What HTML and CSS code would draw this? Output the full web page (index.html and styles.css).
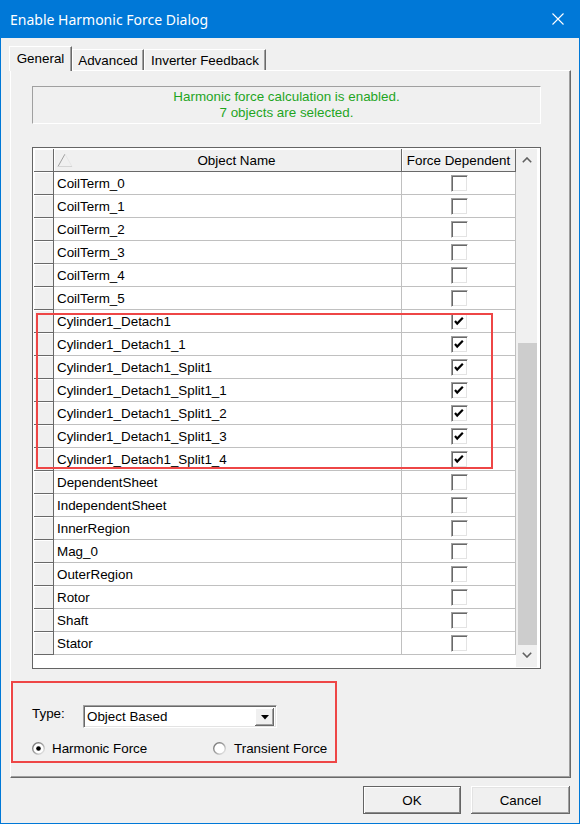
FILE: index.html
```html
<!DOCTYPE html>
<html>
<head>
<meta charset="utf-8">
<link rel="stylesheet" href="styles.css">
</head>
<body>
<div class="window">
  <div class="titlebar">
    <span class="title">Enable Harmonic Force Dialog</span>
    <svg class="close" width="12" height="12" viewBox="0 0 12 12"><path d="M0.5 0.5 L11.5 11.5 M11.5 0.5 L0.5 11.5" stroke="#fff" stroke-width="1.1" fill="none"/></svg>
  </div>
  <div class="client">
    <div class="tabs">
      <div class="tab active t1">General</div>
      <div class="tab t2">Advanced</div>
      <div class="tab t3">Inverter Feedback</div>
    </div>
    <div class="panel">
      <div class="message">
        <div>Harmonic force calculation is enabled.</div>
        <div>7 objects are selected.</div>
      </div>
      <div class="grid">
        <div class="main">
          <div class="row">
            <div class="rh hdr"></div>
            <div class="name hc">
              <svg class="tri" width="16" height="14" viewBox="0 0 16 14"><path d="M1 13.5 L8 1" stroke="#a0a0a0" stroke-width="1" fill="none"/><path d="M8 1 L15 13.5" stroke="#e6e6e6" stroke-width="1" fill="none"/><path d="M1 13.5 L15 13.5" stroke="#d4d4d4" stroke-width="1" fill="none"/></svg>
              <span class="hname">Object Name</span>
            </div>
            <div class="force hc">Force Dependent</div>
          </div>
          <div class="row"><div class="rh"></div><div class="name">CoilTerm_0</div><div class="force"><span class="cb"></span></div></div>
          <div class="row"><div class="rh"></div><div class="name">CoilTerm_1</div><div class="force"><span class="cb"></span></div></div>
          <div class="row"><div class="rh"></div><div class="name">CoilTerm_2</div><div class="force"><span class="cb"></span></div></div>
          <div class="row"><div class="rh"></div><div class="name">CoilTerm_3</div><div class="force"><span class="cb"></span></div></div>
          <div class="row"><div class="rh"></div><div class="name">CoilTerm_4</div><div class="force"><span class="cb"></span></div></div>
          <div class="row"><div class="rh"></div><div class="name">CoilTerm_5</div><div class="force"><span class="cb"></span></div></div>
          <div class="row"><div class="rh"></div><div class="name">Cylinder1_Detach1</div><div class="force"><span class="cb"><svg width="15" height="15" viewBox="0 0 15 15"><path d="M3 7 L5.2 9.6 L10.8 3.8" stroke="#000" stroke-width="2.2" fill="none"/></svg></span></div></div>
          <div class="row"><div class="rh"></div><div class="name">Cylinder1_Detach1_1</div><div class="force"><span class="cb"><svg width="15" height="15" viewBox="0 0 15 15"><path d="M3 7 L5.2 9.6 L10.8 3.8" stroke="#000" stroke-width="2.2" fill="none"/></svg></span></div></div>
          <div class="row"><div class="rh"></div><div class="name">Cylinder1_Detach1_Split1</div><div class="force"><span class="cb"><svg width="15" height="15" viewBox="0 0 15 15"><path d="M3 7 L5.2 9.6 L10.8 3.8" stroke="#000" stroke-width="2.2" fill="none"/></svg></span></div></div>
          <div class="row"><div class="rh"></div><div class="name">Cylinder1_Detach1_Split1_1</div><div class="force"><span class="cb"><svg width="15" height="15" viewBox="0 0 15 15"><path d="M3 7 L5.2 9.6 L10.8 3.8" stroke="#000" stroke-width="2.2" fill="none"/></svg></span></div></div>
          <div class="row"><div class="rh"></div><div class="name">Cylinder1_Detach1_Split1_2</div><div class="force"><span class="cb"><svg width="15" height="15" viewBox="0 0 15 15"><path d="M3 7 L5.2 9.6 L10.8 3.8" stroke="#000" stroke-width="2.2" fill="none"/></svg></span></div></div>
          <div class="row"><div class="rh"></div><div class="name">Cylinder1_Detach1_Split1_3</div><div class="force"><span class="cb"><svg width="15" height="15" viewBox="0 0 15 15"><path d="M3 7 L5.2 9.6 L10.8 3.8" stroke="#000" stroke-width="2.2" fill="none"/></svg></span></div></div>
          <div class="row"><div class="rh"></div><div class="name">Cylinder1_Detach1_Split1_4</div><div class="force"><span class="cb"><svg width="15" height="15" viewBox="0 0 15 15"><path d="M3 7 L5.2 9.6 L10.8 3.8" stroke="#000" stroke-width="2.2" fill="none"/></svg></span></div></div>
          <div class="row"><div class="rh"></div><div class="name">DependentSheet</div><div class="force"><span class="cb"></span></div></div>
          <div class="row"><div class="rh"></div><div class="name">IndependentSheet</div><div class="force"><span class="cb"></span></div></div>
          <div class="row"><div class="rh"></div><div class="name">InnerRegion</div><div class="force"><span class="cb"></span></div></div>
          <div class="row"><div class="rh"></div><div class="name">Mag_0</div><div class="force"><span class="cb"></span></div></div>
          <div class="row"><div class="rh"></div><div class="name">OuterRegion</div><div class="force"><span class="cb"></span></div></div>
          <div class="row"><div class="rh"></div><div class="name">Rotor</div><div class="force"><span class="cb"></span></div></div>
          <div class="row"><div class="rh"></div><div class="name">Shaft</div><div class="force"><span class="cb"></span></div></div>
          <div class="row"><div class="rh"></div><div class="name">Stator</div><div class="force"><span class="cb"></span></div></div>
          <div class="highlight"></div>
        </div>
        <div class="scroll">
          <div class="sbtn"><svg width="10" height="6" viewBox="0 0 10 6"><path d="M0.8 5.2 L5 1 L9.2 5.2" stroke="#606060" stroke-width="1.6" fill="none"/></svg></div>
          <div class="track"></div>
          <div class="thumb"></div>
          <div class="sbtn down"><svg width="10" height="6" viewBox="0 0 10 6"><path d="M0.8 0.8 L5 5 L9.2 0.8" stroke="#606060" stroke-width="1.6" fill="none"/></svg></div>
        </div>
      </div>
      <div class="group">
        <div class="type-row">
          <span class="type-label">Type:</span>
          <div class="combo">
            <span class="combo-text">Object Based</span>
            <span class="combo-btn"><svg width="8" height="5" viewBox="0 0 8 5"><path d="M0 0 L8 0 L4 4.5 Z" fill="#000"/></svg></span>
          </div>
        </div>
        <div class="radio-row">
          <div class="radio-item first">
            <svg class="radio" width="13" height="13" viewBox="0 0 13 13"><defs><linearGradient id="rg" x1="0" y1="0" x2="1" y2="1"><stop offset="0" stop-color="#6e6e6e"/><stop offset="0.5" stop-color="#a0a0a0"/><stop offset="1" stop-color="#f4f4f4"/></linearGradient></defs><circle cx="6.5" cy="6.5" r="5.8" fill="#fff" stroke="url(#rg)" stroke-width="1.4"/><circle cx="6.5" cy="6.5" r="2.3" fill="#000"/></svg>
            <span>Harmonic Force</span>
          </div>
          <div class="radio-item">
            <svg class="radio" width="13" height="13" viewBox="0 0 13 13"><circle cx="6.5" cy="6.5" r="5.8" fill="#fff" stroke="url(#rg)" stroke-width="1.4"/></svg>
            <span>Transient Force</span>
          </div>
        </div>
      </div>
    </div>
    <div class="buttons">
      <button class="btn default">OK</button>
      <button class="btn cancel">Cancel</button>
    </div>
  </div>
</div>
</body>
</html>
```

FILE: styles.css
```css
html, body {
  margin: 0;
  padding: 0;
  background: #f0f0f0;
}
body {
  font-family: "Liberation Sans", Arial, sans-serif;
  font-size: 13.4px;
  color: #000;
}
.window {
  width: 580px;
  height: 824px;
  box-sizing: border-box;
  border: 1px solid #0078d7;
  border-top: 0;
  background: #f0f0f0;
  display: flex;
  flex-direction: column;
}
.titlebar {
  height: 38px;
  flex: none;
  background: #0078d7;
  color: #fff;
  display: flex;
  align-items: center;
  padding-left: 9px;
  font-family: "Noto Sans", "Open Sans", sans-serif;
  font-size: 14px;
}
.close {
  margin-left: auto;
  margin-right: 15px;
}
.client {
  padding: 8px 0 0 9px;
}
.tabs {
  display: flex;
  align-items: flex-end;
  height: 24px;
}
.tab {
  height: 21px;
  box-sizing: border-box;
  display: flex;
  align-items: center;
  justify-content: center;
  border-top: 1px solid #fff;
  border-left: 1px solid #fff;
  border-right: 1px solid #696969;
  box-shadow: inset -1px 0 #a0a0a0;
  background: #f0f0f0;
}
.tab.active {
  height: 25px;
  margin-left: -1px;
  margin-bottom: -1px;
  position: relative;
  z-index: 1;
  padding-bottom: 1px;
}
.t1 { width: 63px; }
.t2 { width: 72px; }
.t3 { width: 122px; }
.panel {
  width: 561px;
  height: 708px;
  box-sizing: border-box;
  border-top: 1px solid #fff;
  border-left: 1px solid #fff;
  border-right: 1px solid #696969;
  border-bottom: 1px solid #696969;
  box-shadow: inset -1px -1px #a0a0a0;
  display: flex;
  flex-direction: column;
}
.message {
  margin: 15px 0 0 21px;
  width: 509px;
  height: 38px;
  box-sizing: border-box;
  border: 1px solid;
  border-color: #a0a0a0 #fff #fff #a0a0a0;
  color: #1fa51f;
  text-align: center;
  line-height: 16px;
  padding-top: 2px;
}
.grid {
  margin: 23px 0 0 21px;
  width: 509px;
  height: 522px;
  box-sizing: border-box;
  border: 1px solid #646464;
  padding: 1px;
  background: #fff;
  display: flex;
}
.main {
  width: 482px;
  position: relative;
}
.row {
  display: flex;
  height: 23px;
}
.rh {
  width: 20px;
  box-sizing: border-box;
  background: #f0f0f0;
  border-right: 1px solid #696969;
  border-bottom: 1px solid #696969;
  box-shadow: inset 1px 1px #fff;
}
.name {
  width: 348px;
  box-sizing: border-box;
  border-right: 1px solid #c0c0c0;
  border-bottom: 1px solid #c0c0c0;
  padding-left: 3px;
  display: flex;
  align-items: center;
  white-space: nowrap;
}
.force {
  width: 114px;
  box-sizing: border-box;
  border-right: 1px solid #c0c0c0;
  border-bottom: 1px solid #c0c0c0;
  display: flex;
  align-items: center;
  justify-content: center;
}
.hc {
  background: #f0f0f0;
  border-right: 1px solid #696969;
  border-bottom: 1px solid #696969;
  box-shadow: inset 1px 1px #fff;
}
.name.hc {
  padding-left: 3px;
  position: relative;
}
.tri {
  flex: none;
}
.hname {
  flex: 1;
  text-align: center;
  padding-right: 1px;
}
.cb {
  width: 17px;
  height: 17px;
  box-sizing: border-box;
  background: #fff;
  border: 1px solid;
  border-color: #a0a0a0 #fff #fff #a0a0a0;
  box-shadow: inset 1px 1px #696969, inset -1px -1px #e3e3e3;
  display: block;
  margin-left: 1px;
}
.cb svg {
  display: block;
}
.highlight {
  position: absolute;
  left: 2px;
  top: 164px;
  width: 457px;
  height: 156px;
  box-sizing: border-box;
  border: 2px solid #ee4646;
  pointer-events: none;
}
.scroll {
  width: 21px;
  display: flex;
  flex-direction: column;
  background: #f0f0f0;
}
.sbtn {
  height: 22px;
  flex: none;
  display: flex;
  align-items: center;
  justify-content: center;
  padding-left: 1px;
}
.sbtn.down {
  padding-bottom: 2px;
  box-sizing: border-box;
}
.track {
  height: 172px;
  flex: none;
}
.thumb {
  height: 302px;
  flex: none;
  background: #cdcdcd;
  margin-left: 2px;
}
.group {
  margin-top: 12px;
  width: 326px;
  height: 82px;
  box-sizing: border-box;
  border: 2px solid #ee4646;
}
.type-row {
  display: flex;
  margin-top: 22px;
  padding-left: 19px;
  height: 23px;
}
.type-label {
  width: 51px;
  line-height: 18px;
}
.combo {
  width: 194px;
  height: 23px;
  box-sizing: border-box;
  background: #fff;
  border: 1px solid;
  border-color: #a0a0a0 #fff #fff #a0a0a0;
  box-shadow: inset 1px 1px #696969, inset -1px -1px #e3e3e3;
  display: flex;
  align-items: center;
  padding: 2px 2px 2px 3px;
}
.combo-text {
  flex: 1;
}
.combo-btn {
  width: 19px;
  height: 18px;
  box-sizing: border-box;
  background: #f0f0f0;
  box-shadow: inset -1px -1px #696969, inset 1px 1px #fff, inset -2px -2px #a0a0a0;
  display: flex;
  align-items: center;
  justify-content: center;
  padding-top: 1px;
}
.combo-btn svg {
  display: block;
}
.radio-row {
  display: flex;
  margin-top: 12px;
  padding-left: 19px;
  height: 16px;
  align-items: center;
}
.radio-item {
  display: flex;
  align-items: center;
  gap: 7px;
}
.radio-item.first {
  width: 181px;
}
.radio-item + .radio-item {
  gap: 8px;
}
.radio {
  display: block;
  flex: none;
}
.buttons {
  display: flex;
  justify-content: flex-end;
  gap: 10px;
  width: 561px;
  margin-top: 8px;
}
.btn {
  height: 28px;
  box-sizing: border-box;
  font-family: "Liberation Sans", Arial, sans-serif;
  font-size: 13.4px;
  color: #000;
  background: #f0f0f0;
  border: 0;
  padding: 0;
  margin: 0;
}
.btn.default {
  width: 98px;
  border: 1px solid #646464;
  box-shadow: inset 1px 1px #fff, inset -1px -1px #8a8a8a;
}
.btn.cancel {
  width: 99px;
  margin-right: 1px;
  box-shadow: inset -1px -1px #696969, inset 1px 1px #fff, inset -2px -2px #a0a0a0, inset 2px 2px #e3e3e3;
}
```
